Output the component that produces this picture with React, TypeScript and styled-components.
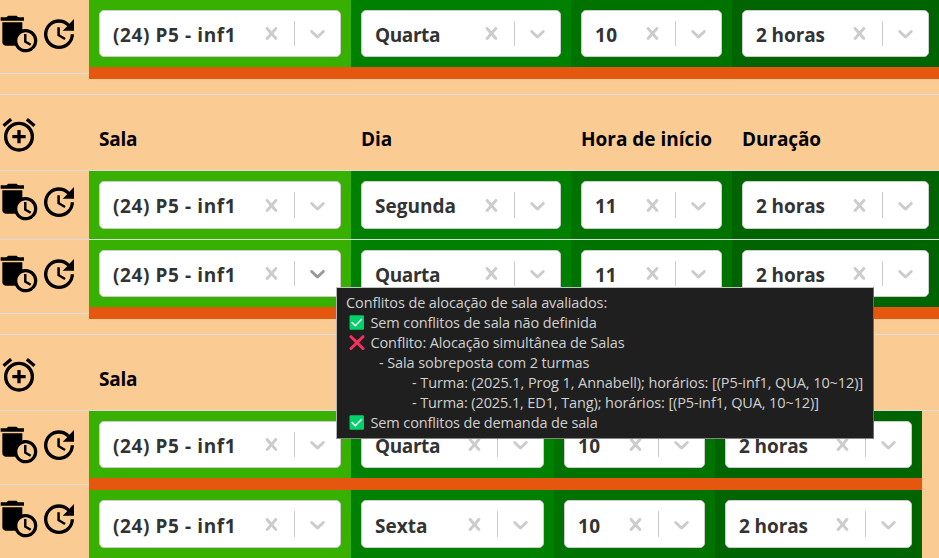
import React from "react";
import styled, { createGlobalStyle } from "styled-components";
import { MdAutoDelete, MdUpdate, MdOutlineAlarmAdd } from "react-icons/md";

const GlobalStyle = createGlobalStyle`
  * { box-sizing: border-box; }
  body { margin: 0; background: #fbcb94; overflow: hidden; }
`;

const LINE = "#dcdcdc";

const Page = styled.div`
  position: relative;
  width: 939px;
  height: 558px;
  overflow: hidden;
  background: #fbcb94;
  color: #000;
  font: 700 19px/24px "Open Sans", "Noto Sans", sans-serif;
`;

const Group = styled.section<{ $height: number }>`
  height: ${(p) => p.$height}px;
`;

const Header = styled.div`
  display: flex;
  height: 77px;
  border-top: 1px solid ${LINE};
  border-bottom: 1px solid ${LINE};
`;

const HeaderAction = styled.div`
  width: 89px;
  padding-top: 20px;
  svg { display: block; margin-left: -1px; }
`;

const HeaderCell = styled.div<{ $width: number; $spacing: number }>`
  width: ${(p) => p.$width}px;
  padding: 32px 0 0 10px;
  white-space: nowrap;
  letter-spacing: ${(p) => p.$spacing}px;
`;

const Body = styled.div`
  display: flex;
  align-items: flex-start;
`;

const Actions = styled.div`
  width: 89px;
  flex: none;
`;

const ActionSlot = styled.div<{ $height: number; $top: number }>`
  display: flex;
  height: ${(p) => p.$height}px;
  padding-top: ${(p) => p.$top}px;
  border-bottom: 1px solid ${LINE};
  svg { flex: none; }
  svg:first-child { margin-left: -1px; }
`;

const Rows = styled.div`
  flex: none;
`;

const Row = styled.div<{ $line?: boolean }>`
  display: flex;
  border-bottom: ${(p) => (p.$line ? `1px solid ${LINE}` : "none")};
`;

const Conflict = styled.div`
  height: 12px;
  background: #e5570f;
`;

const Cell = styled.div<{ $width: number; $color: string }>`
  width: ${(p) => p.$width}px;
  padding: 10px;
  background: ${(p) => p.$color};
`;

const Control = styled.div<{ $height: number }>`
  display: flex;
  height: ${(p) => p.$height}px;
  border: 1px solid #ccc;
  border-radius: 5px;
  background: #fff;
  color: #333;
`;

const Value = styled.span<{ $spacing: number; $top: number }>`
  flex: 1;
  padding: ${(p) => p.$top}px 0 0 13px;
  white-space: nowrap;
  letter-spacing: ${(p) => p.$spacing}px;
`;

const Indicator = styled.span<{ $hover?: boolean }>`
  display: flex;
  width: 45px;
  align-items: center;
  justify-content: center;
  color: ${(p) => (p.$hover ? "#999" : "#ccc")};
`;

const Separator = styled.span`
  width: 1px;
  margin: 10px 0;
  background: #ccc;
`;

const Tooltip = styled.div`
  position: absolute;
  left: 336px;
  top: 287px;
  width: 538px;
  height: 152px;
  padding: 5px 0 0 9px;
  border: 1px solid;
  border-color: #c4c4c4 #6c6c6c #858585 #b4b4b4;
  background: #1f1f1f;
  color: #d0d0d0;
  font: 400 14.5px/20px "Open Sans", "Noto Sans", sans-serif;
`;

const TipLine = styled.div<{ $indent?: number; $spacing: number }>`
  display: flex;
  height: 20px;
  padding-left: ${(p) => p.$indent ?? 0}px;
  white-space: pre;
  letter-spacing: ${(p) => p.$spacing}px;
  svg { flex: none; margin: 2px 6px 0 2.5px; }
`;

const CrossIcon = () => (
  <svg width="25" height="25" viewBox="0 0 20 20" fill="currentColor">
    <path d="M14.348 14.849c-0.469 0.469-1.229 0.469-1.697 0l-2.651-3.030-2.651 3.029c-0.469 0.469-1.229 0.469-1.697 0-0.469-0.469-0.469-1.229 0-1.697l2.758-3.15-2.759-3.152c-0.469-0.469-0.469-1.228 0-1.697s1.228-0.469 1.697 0l2.652 3.031 2.651-3.031c0.469-0.469 1.228-0.469 1.697 0s0.469 1.229 0 1.697l-2.758 3.152 2.758 3.15c0.469 0.469 0.469 1.229 0 1.698z" />
  </svg>
);

const ChevronIcon = () => (
  <svg width="25" height="25" viewBox="0 0 20 20" fill="currentColor">
    <path d="M4.516 7.548c0.436-0.446 1.043-0.481 1.576 0l3.908 3.747 3.908-3.747c0.533-0.481 1.141-0.446 1.574 0 0.436 0.445 0.408 1.197 0 1.615-0.406 0.418-4.695 4.502-4.695 4.502-0.217 0.223-0.502 0.335-0.787 0.335s-0.57-0.112-0.789-0.335c0 0-4.287-4.084-4.695-4.502s-0.436-1.17 0-1.615z" />
  </svg>
);

const PassIcon = () => (
  <svg width="16" height="16" viewBox="0 0 16 16">
    <rect x="0.5" y="0.2" width="14.5" height="14.5" rx="1.2" fill="#00d26a" />
    <path d="M3.2 7.6 6.3 10.7 12.4 4.5" fill="none" stroke="#f4f4f4" strokeWidth="1.6" strokeLinecap="round" strokeLinejoin="round" />
  </svg>
);

const FailIcon = () => (
  <svg width="16" height="16" viewBox="0 0 16 16">
    <path d="M2 1.7 14 13.5M14 1.7 2 13.5" stroke="#f92f60" strokeWidth="3" strokeLinecap="round" />
  </svg>
);

const COLORS = ["#38b000", "#008000", "#007200", "#006400"];
const WIDE = [262, 220, 161, 207];
const NARROW = [262, 203, 161, 207];

const SPACING: Record<string, number> = {
  "(24) P5 - inf1": 0.6,
  Quarta: -0.4,
  "10": 0.5,
  "2 horas": -0.1,
  "Sala": -0.25,
  "Duração": -0.1,
};

type ScheduleProps = { widths: number[]; day: string; hour: string; height?: number; textTop?: number; line?: boolean; hover?: boolean };

const Schedule = ({ widths, day, hour, height = 47, textTop = 12, line, hover }: ScheduleProps) => (
  <Row $line={line}>
    {["(24) P5 - inf1", day, hour, "2 horas"].map((text, i) => (
      <Cell key={i} $width={widths[i]} $color={COLORS[i]}>
        <Control $height={height}>
          <Value $spacing={SPACING[text] ?? 0} $top={textTop}>{text}</Value>
          <Indicator><CrossIcon /></Indicator>
          <Separator />
          <Indicator $hover={hover && i === 0}><ChevronIcon /></Indicator>
        </Control>
      </Cell>
    ))}
  </Row>
);

const Slot = ({ height, top = 14 }: { height: number; top?: number }) => (
  <ActionSlot $height={height} $top={top}>
    <MdAutoDelete size={40} />
    <MdUpdate size={40} />
  </ActionSlot>
);

const TableHeader = ({ widths, labels }: { widths: number[]; labels: string[] }) => (
  <Header>
    <HeaderAction><MdOutlineAlarmAdd size={40} /></HeaderAction>
    {labels.map((label, i) => (
      <HeaderCell key={label} $width={widths[i]} $spacing={SPACING[label] ?? 0}>{label}</HeaderCell>
    ))}
  </Header>
);

const LABELS = ["Sala", "Dia", "Hora de início", "Duração"];

export default function App() {
  return (
    <Page>
      <GlobalStyle />
      <Group $height={94}>
        <Body>
          <Actions><Slot height={74} /></Actions>
          <Rows>
            <Schedule widths={WIDE} day="Quarta" hour="10" />
            <Conflict />
          </Rows>
        </Body>
      </Group>
      <Group $height={240}>
        <TableHeader widths={WIDE} labels={LABELS} />
        <Body>
          <Actions>
            <Slot height={69} top={11} />
            <Slot height={74} />
          </Actions>
          <Rows>
            <Schedule widths={WIDE} day="Segunda" hour="11" height={48} line />
            <Schedule widths={WIDE} day="Quarta" hour="11" hover />
            <Conflict />
          </Rows>
        </Body>
      </Group>
      <Group $height={224}>
        <TableHeader widths={NARROW} labels={["Sala"]} />
        <Body>
          <Actions>
            <Slot height={74} />
            <Slot height={74} />
          </Actions>
          <Rows>
            <Schedule widths={NARROW} day="Quarta" hour="10" />
            <Conflict />
            <Schedule widths={NARROW} day="Sexta" hour="10" height={48} textTop={13} />
          </Rows>
        </Body>
      </Group>
      <Tooltip>
        <TipLine $spacing={-0.11}>Conflitos de alocação de sala avaliados:</TipLine>
        <TipLine $spacing={-0.12}><PassIcon />Sem conflitos de sala não definida</TipLine>
        <TipLine $spacing={-0.12}><FailIcon />Conflito: Alocação simultânea de Salas</TipLine>
        <TipLine $indent={33} $spacing={-0.1}>- Sala sobreposta com 2 turmas</TipLine>
        <TipLine $indent={66} $spacing={-0.08}>- Turma: (2025.1, Prog 1, Annabell); horários: [(P5-inf1, QUA, 10~12)]</TipLine>
        <TipLine $indent={66} $spacing={-0.11}>- Turma: (2025.1, ED1, Tang); horários: [(P5-inf1, QUA, 10~12)]</TipLine>
        <TipLine $spacing={-0.12}><PassIcon />Sem conflitos de demanda de sala</TipLine>
      </Tooltip>
    </Page>
  );
}
